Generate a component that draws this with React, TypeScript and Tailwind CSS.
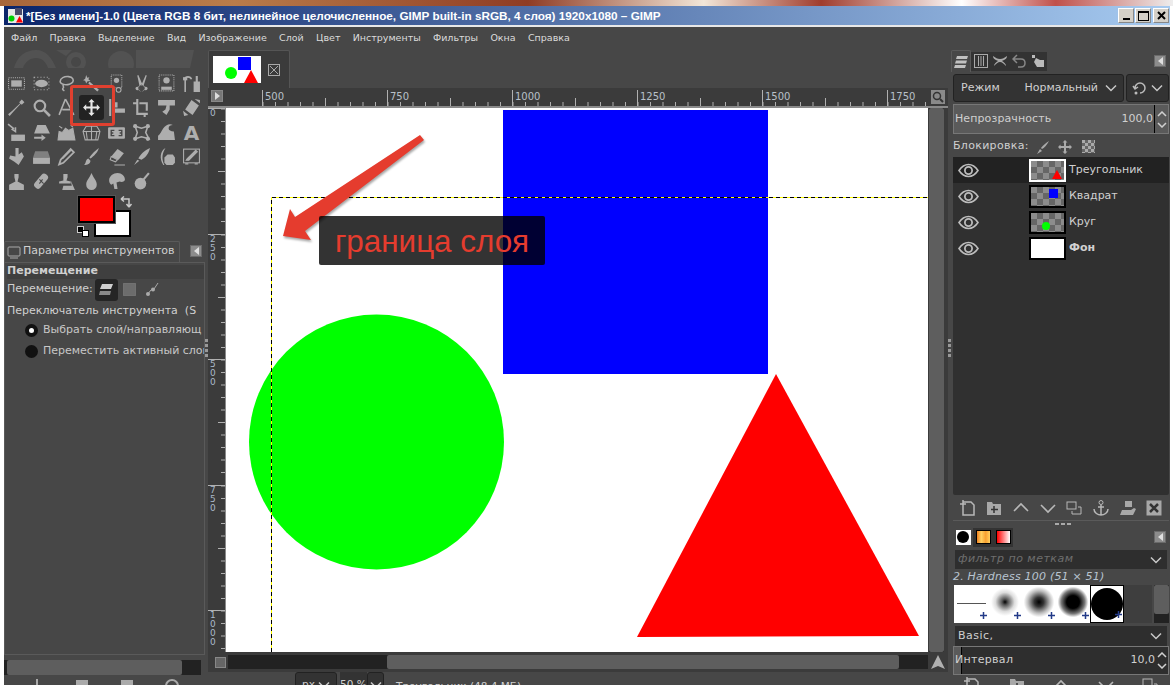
import type { ReactNode } from "react";

const sans = "font-['DejaVu_Sans',sans-serif]";

const menu = ["Файл", "Правка", "Выделение", "Вид", "Изображение", "Слой", "Цвет", "Инструменты", "Фильтры", "Окна", "Справка"];

// tool icons, 18x18 box, rows as in the toolbox
const toolIcons: ReactNode[] = [
  <><rect x="1.5" y="3.5" width="15" height="11" fill="none" stroke="currentColor" strokeDasharray="1 1" /><rect x="4" y="6" width="10" height="6" fill="currentColor" /></>,
  <><rect x="2" y="3" width="14" height="12" fill="none" stroke="currentColor" strokeDasharray="1 2" /><ellipse cx="9" cy="9" rx="6" ry="3.5" fill="currentColor" /></>,
  <path d="M3 7c0-3 4-5 8-4.500s5 3 4 5-5 3-8 2.500c-2-.5-4-1-4-3zM6 10c-1 2 1 2 0 3s-1 2 1 3" fill="none" stroke="currentColor" strokeWidth="1.500" />,
  <path d="M4 1l1 2.500 2-.5-1 2 2 1.500-3 .5-1 2-1-2.500L1 6l2-1.500zM7 7l9 8-1.500 1.500L6 9z" fill="currentColor" />,
  <><rect x="4" y="1" width="10" height="12" fill="none" stroke="currentColor" strokeDasharray="1 1" /><circle cx="9" cy="6" r="2.500" fill="currentColor" /><circle cx="11" cy="15" r="2.300" fill="none" stroke="currentColor" /></>,
  <path d="M6 1l3.500 8L13 1l1 .5-3 9.500a3 3 0 1 1-1.500-.5L9 10l-.5.500a3 3 0 1 1-1.500.5L5 1.500zM5 12a1.700 1.700 0 1 0 .1 0zM13 12a1.700 1.700 0 1 0 .1 0z" fill="currentColor" fillRule="evenodd" />,
  <><rect x="2" y="1" width="14" height="15" fill="none" stroke="currentColor" strokeDasharray="1 1" /><circle cx="9" cy="6" r="3" fill="currentColor" /><path d="M4 15v-3h10v3z" fill="currentColor" /></>,
  <><path d="M3 17V5c0-3 5-3 6 0" fill="none" stroke="currentColor" strokeWidth="1.500" /><rect x="1" y="3" width="4" height="3" fill="currentColor" /><path d="M11 7h6v10h-6zM13 2h2v5h-2z" fill="currentColor" /></>,

  <path d="M14 1.500l2.500 2.500-2.500 2.500-1-1L6 13l-3.500 4L1 15.500l4-3.500 7.500-7-1-1z" fill="currentColor" />,
  <><circle cx="7.500" cy="7.500" r="5" fill="none" stroke="currentColor" strokeWidth="2" /><path d="M11 11l6 6" stroke="currentColor" strokeWidth="2.500" /></>,
  <path d="M8 1l8 15M8 1L2 16M5 11h8" fill="none" stroke="currentColor" strokeWidth="1.500" />,
  <path d="M9 1l3 3h-2v4h4V6l3 3-3 3v-2h-4v4h2l-3 3-3-3h2v-4H4v2L1 9l3-3v2h4V4H6z" fill="#e8e8e8" />,
  <path d="M2 1h2v16H2zM6 4h4v5h-4zM6 10h11v4H6z" fill="currentColor" />,
  <path d="M1 4h3V1h2v13h9v2h-2v2h-2v-2H4V6H1zM7 4h8v8h-2V6H7z" fill="currentColor" />,
  <path d="M1 2h16v5h-5v4l-3 5-4-3 3-2 1-4H1z" fill="currentColor" />,
  <path d="M9 2l7 5-6 9-7-5zM12 1l5 1v3zM1 12l1 5 4-1z" fill="currentColor" />,

  <><path d="M1 1l5 4-1 1 3 2V4" fill="none" stroke="currentColor" strokeWidth="1.500" /><rect x="4" y="11" width="13" height="6" fill="currentColor" /></>,
  <path d="M5 2h8l4 8H2zM2 13h7v-2l4 3-4 3v-2H2z" fill="currentColor" />,
  <path d="M2 8l3 1 3-4 3 2 4-2 2 11H1zM2 3l3 2M13 2l2 2" fill="currentColor" stroke="currentColor" />,
  <path d="M4 3h10l3 5-2 8H3L1 8zM1 8h16M9 3v13M5 16L4 8M13 16l1-8" fill="none" stroke="currentColor" />,
  <><rect x="1" y="4" width="16" height="11" rx="1" fill="currentColor" /><path d="M7 7H4v5h3M11 7h3v5h-3M6 9.500H4M12 9.500h2" fill="none" stroke="#474747" strokeWidth="1.300" /></>,
  <><path d="M3 3l6 2 6-2-2 6 3 6-7-2-6 2 2-6z" fill="none" stroke="currentColor" strokeWidth="1.500" /><circle cx="3" cy="3" r="2" fill="currentColor" /><circle cx="15" cy="3" r="2" fill="currentColor" /><circle cx="3" cy="15" r="2" fill="currentColor" /><circle cx="15" cy="15" r="2" fill="currentColor" /></>,
  <path d="M1 16v-4c2-1 3-4 5-7s6-5 9-3c-2 0-4 1-4 3s2 3 5 3l1 8z" fill="currentColor" />,
  <text x="9" y="16" textAnchor="middle" fontSize="19" fontWeight="700" fill="currentColor" fontFamily="DejaVu Sans">A</text>,

  <path d="M8 1h3v6l3-2 2 4-5 8-4-3-5-3 1-3 5 1z" fill="currentColor" />,
  <><path d="M3 4h12l2 6H1z" fill="currentColor" opacity=".55" /><rect x="1" y="10" width="16" height="6" fill="currentColor" /></>,
  <path d="M13 2l3 3L6 15l-4 1.500L3.500 12zM13 3L5 11" fill="none" stroke="currentColor" strokeWidth="1.700" />,
  <path d="M16 1c-1 4-5 8-8 10l-1-1c2-3 6-7 9-9zM6 11l2 2c0 3-3 4-6 4 2-1 1-5 4-6z" fill="currentColor" />,
  <><path d="M10 2l6 4-5 6-7-3z" fill="currentColor" /><path d="M4 9l6 3-2 2-5-2zM7 17h10" stroke="currentColor" fill="none" /></>,
  <path d="M17 1c-1 5-4 9-8 11l-3-1c2-4 6-8 11-10zM5 12l2 1-5 4z" fill="currentColor" />,
  <><path d="M8 1C3 4 2 11 6 17h1C4 11 5 6 8 1z" fill="currentColor" /><path d="M10 7h5l2 3v5l-2 2h-6l-2-2v-5z" fill="currentColor" /></>,
  <><rect x="1.500" y="2" width="15" height="13" fill="none" stroke="currentColor" /><path d="M5 11l8-8 1.500 1.500-8 8H4zM3 16h3M12 16h3" fill="currentColor" stroke="currentColor" /></>,

  <path d="M7 2h4v3l-1 4 6 3v4H2v-4l6-3-1-4zM2 16h14v1H2z" fill="currentColor" />,
  <><rect x="5" y="1" width="7" height="16" rx="3" transform="rotate(40 9 9)" fill="currentColor" /><path d="M7 7l4 4M10 7l-3 4" stroke="#474747" /></>,
  <path d="M6 2h4v3l-1 3 4 1v2H2V9l4-1zM13 8l4 9H5l1-4h8z" fill="currentColor" />,
  <path d="M9 1c2 5 5 7 5 11a5 5 0 0 1-10 0c0-4 3-6 5-11z" fill="currentColor" />,
  <path d="M2 8c0-4 4-7 8-7s7 3 7 6c0 2-3 3-5 2l-3 1 1 6H7l-1-5-2 1c-1-1-2-2-2-4z" fill="currentColor" />,
  <><circle cx="8" cy="11" r="5.500" fill="currentColor" /><path d="M11 7l5-6" stroke="currentColor" strokeWidth="2" /></>,
];

const Tool = ({ icon, active }: { icon: ReactNode; active?: boolean }) => (
  <div className="flex h-[24.500px] w-[25px] items-center justify-center">
    <div className={active ? "flex h-[25px] w-[25px] items-center justify-center rounded-[3px] bg-[#222]" : "flex h-[25px] w-[25px] items-center justify-center"}>
      <svg width="19" height="19" viewBox="0 0 18 18" className="text-[#aeaeae]">{icon}</svg>
    </div>
  </div>
);

const Collapse = () => (
  <div className="flex h-[12px] w-[12px] items-center justify-center border border-[#6a6a6a] bg-[#8c8c8c]">
    <div className="h-0 w-0 border-y-[4px] border-r-[5px] border-y-transparent border-r-[#e0e0e0]" />
  </div>
);

const Chevron = ({ className = "" }: { className?: string }) => (
  <svg width="12" height="8" viewBox="0 0 12 8" className={className}>
    <path d="M1 1.500l5 5 5-5" fill="none" stroke="#c8c8c8" strokeWidth="1.500" />
  </svg>
);

const Spin = () => (
  <div className="flex w-[13px] flex-col items-center justify-center gap-[5px]">
    <svg width="10" height="6" viewBox="0 0 10 6"><path d="M1 5l4-4 4 4" fill="none" stroke="#d0d0d0" strokeWidth="1.500" /></svg>
    <svg width="10" height="6" viewBox="0 0 10 6"><path d="M1 1l4 4 4-4" fill="none" stroke="#d0d0d0" strokeWidth="1.500" /></svg>
  </div>
);

const Eye = () => (
  <svg width="21" height="15" viewBox="0 0 21 15">
    <path d="M1 7.500C4 3 7 1.500 10.500 1.500S17 3 20 7.500c-3 4.500-6 6-9.500 6S4 12 1 7.500z" fill="none" stroke="#bdbdbd" strokeWidth="1.600" />
    <circle cx="10.500" cy="7.500" r="3.600" fill="none" stroke="#bdbdbd" strokeWidth="1.800" />
  </svg>
);

const checker = "bg-[repeating-conic-gradient(#666_0%_25%,#8c8c8c_0%_50%)] bg-[length:12px_12px]";

const layers = [
  { name: "Треугольник", selected: true, mark: <div className="absolute right-[2px] bottom-[1px] h-0 w-0 border-x-[5px] border-b-[9px] border-x-transparent border-b-[#ff0000]" /> },
  { name: "Квадрат", mark: <div className="absolute top-[2px] left-[18px] h-[9px] w-[9px] bg-[#0000ff]" /> },
  { name: "Круг", mark: <div className="absolute bottom-[2px] left-[11px] h-[8px] w-[8px] rounded-full bg-[#00ff00]" /> },
  { name: "Фон", bold: true, white: true },
];

const LayerRow = ({ name, selected, mark, bold, white }: { name: string; selected?: boolean; mark?: ReactNode; bold?: boolean; white?: boolean }) => (
  <div className={selected ? "flex h-[26px] items-center bg-[#222]" : "flex h-[26px] items-center"}>
    <div className="flex w-[76px] justify-center pr-[46px]"><Eye /></div>
    <div className={(selected ? "border-white " : "border-black ") + "relative h-[23px] w-[37px] shrink-0 border-2 " + (white ? "bg-white" : checker)}>{mark}</div>
    <span className={"ml-[3px] text-[11px] text-[#d0d0d0] " + (bold ? "font-bold" : "")}>{name}</span>
  </div>
);

// one stretch of the horizontal ruler, starts at a big tick
const RulerCell = ({ label }: { label: string }) => (
  <div className="relative h-full w-[125px] shrink-0 border-l border-[#b0b0b0]">
    <span className="block pl-[2px] text-[10px] leading-[14px] text-[#b8c0c8]">{label}</span>
    <svg width="125" height="16" className="absolute top-0 left-0">
      {Array.from({ length: 10 }).map((_, i) => (
        <line key={i} x1={i * 12.5} x2={i * 12.5} y1={i === 5 ? 8 : 12} y2="16" stroke="#b0b0b0" />
      ))}
    </svg>
  </div>
);

const VRulerCell = ({ digits }: { digits: string }) => (
  <div className="relative h-[125.500px] w-full shrink-0 border-t border-[#b0b0b0]">
    <div className="flex w-[10px] flex-col pl-[2px] text-[9px] leading-[9px] text-[#a9b8c8]">
      {digits.split("").map((d, i) => <span key={i}>{d}</span>)}
    </div>
    <svg width="17" height="125" className="absolute top-0 left-0">
      {Array.from({ length: 10 }).map((_, i) => (
        <line key={i} y1={i * 12.5} y2={i * 12.5} x1={i === 5 ? 10 : 13} x2="17" stroke="#b0b0b0" />
      ))}
    </svg>
  </div>
);

const layerIcons: ReactNode[] = [
  <path d="M4 3h8l3 3v10H4zM1 5h6M4 1v6" fill="none" stroke="#b8b8b8" strokeWidth="1.500" />,
  <><path d="M2 3h5l1 2h8v11H2z" fill="#a8a8a8" /><path d="M9 7v7M6 10.500h7" stroke="#333" strokeWidth="1.500" /></>,
  <path d="M2 12l7-7 7 7" fill="none" stroke="#b8b8b8" strokeWidth="1.600" />,
  <path d="M2 6l7 7 7-7" fill="none" stroke="#b8b8b8" strokeWidth="1.600" />,
  <><rect x="2" y="3" width="9" height="7" fill="none" stroke="#b8b8b8" /><path d="M13 8h3v7H7v-3" fill="none" stroke="#b8b8b8" /></>,
  <><circle cx="9" cy="3.500" r="2" fill="none" stroke="#b8b8b8" /><path d="M9 6v10M6 8h6M2 10c0 4 4 6 7 6s7-2 7-6" fill="none" stroke="#b8b8b8" strokeWidth="1.500" /></>,
  <path d="M6 2h7v6H6zM3 11h9l3-2 2 1-3 6H1z" fill="#a8a8a8" />,
  <><rect x="1.500" y="1.500" width="15" height="15" fill="#a8a8a8" /><path d="M5 5l8 8M13 5l-8 8" stroke="#333" strokeWidth="2.500" /></>,
];

const brushes = [
  "bg-[radial-gradient(circle,#000_0%,#555_14%,#ddd_45%,transparent_66%)]",
  "bg-[radial-gradient(circle,#000_0%,#333_22%,#bbb_52%,transparent_72%)]",
  "bg-[radial-gradient(circle,#000_0%,#000_30%,#777_55%,transparent_72%)]",
];

const BrushMark = () => (
  <svg width="7" height="7" viewBox="0 0 7 7" className="absolute right-[1px] bottom-[4px]">
    <path d="M3.500 0v7M0 3.500h7" stroke="#223a88" strokeWidth="1.500" />
  </svg>
);

export default function App() {
  return (
    <div className={sans + " flex h-[685px] w-[1173px] flex-col overflow-hidden bg-white"}>
      <div className="h-[6px] shrink-0 bg-[linear-gradient(90deg,#a8663a,#b97c4a_20%,#8f3c24_45%,#f2e6d8_60%,#a03c2c_70%,#fff_82%,#c0504a_90%,#eee)]" />

      <div className="flex min-h-0 flex-1 flex-col pr-[3px] pl-[4px]">
        {/* title bar */}
        <div className="flex h-[19px] shrink-0 items-center bg-[linear-gradient(90deg,#0a246a,#a6caf0)] pr-[1px] pl-[3px]">
          <svg width="17" height="17" viewBox="0 0 17 17" className="shrink-0">
            <rect x="1" y="2" width="15" height="14" fill="#e8e8e8" />
            <path d="M8 1h7v7H8z" fill="#4a4a6a" />
            <circle cx="4.500" cy="11.500" r="3" fill="#00d000" />
            <path d="M12.500 9l3.500 6.500H9z" fill="#ff0000" />
          </svg>
          <span className="ml-[2px] font-['Liberation_Sans',sans-serif] text-[11.750px] font-bold whitespace-nowrap text-white">*[Без имени]-1.0 (Цвета RGB 8 бит, нелинейное целочисленное, GIMP built-in sRGB, 4 слоя) 1920x1080 – GIMP</span>
          <div className="ml-auto flex gap-[1px]">
            <div className="flex h-[15px] w-[16px] items-end justify-center border border-[#888] border-t-white border-l-white bg-[#d4d0c8] pb-[2px]"><div className="h-[2px] w-[7px] bg-black" /></div>
            <div className="flex h-[15px] w-[16px] items-center justify-center border border-[#888] border-t-white border-l-white bg-[#d4d0c8]"><div className="h-[10px] w-[11px] border border-t-2 border-black" /></div>
            <div className="ml-[1px] flex h-[15px] w-[16px] items-center justify-center border border-[#888] border-t-white border-l-white bg-[#d4d0c8]">
              <svg width="9" height="9" viewBox="0 0 9 9"><path d="M1 1l7 7M8 1L1 8" stroke="#000" strokeWidth="2" /></svg>
            </div>
          </div>
        </div>

        <div className="flex min-h-0 flex-1 flex-col border-t-2 border-[#e8e8e8] bg-[#474747]">
          {/* menu */}
          <div className="flex h-[23px] shrink-0 items-center gap-[12.300px] pl-[7px] text-[9.500px] text-[#dcdcdc]">
            {menu.map((m) => <span key={m}>{m}</span>)}
          </div>

          <div className="flex min-h-0 flex-1">
            {/* left dock */}
            <div className="flex w-[201px] shrink-0 flex-col">
              <svg width="180" height="18" viewBox="0 0 180 18" className="ml-[10px] shrink-0">
                <path d="M0 18C3 6 12 0 22 0s16 8 20 18h-8c-2-6-6-10-12-10s-11 4-13 10z" fill="#525252" />
                <circle cx="62" cy="12" r="10" fill="#525252" />
                <circle cx="62" cy="12" r="5" fill="#474747" />
                <path d="M42 0h16l-6 6z" fill="#525252" />
                <circle cx="107" cy="14" r="13" fill="#525252" />
                <path d="M122 0h58l-4 18h-54z" fill="#525252" />
              </svg>

              {/* tools */}
              <div className="relative mt-[3px] grid w-[200px] shrink-0 grid-cols-8">
                {toolIcons.map((icon, i) => <Tool key={i} icon={icon} active={i === 11} />)}
                <div className="absolute top-[14px] left-[66px] h-[41px] w-[45px] rounded-[3px] border-[3px] border-[#e0402f]" />
              </div>

              {/* fg / bg colours */}
              <div className="relative mt-[2px] h-[42px] shrink-0">
                <div className="absolute top-[14px] left-[90px] h-[27px] w-[37px] border-2 border-black bg-white" />
                <div className="absolute top-0 left-[74px] h-[27px] w-[37px] border-2 border-black bg-[#ff0000] outline outline-[#555]" />
                <svg width="13" height="13" viewBox="0 0 13 13" className="absolute top-0 left-[116px]">
                  <path d="M1 3h8v7M1 3l3-2.500M1 3l3 2.500M9 11l-2.500-3M9 11l2.500-3" fill="none" stroke="#c8c8c8" strokeWidth="1.500" />
                </svg>
                <div className="absolute top-[30px] left-[73px] h-[7px] w-[7px] border border-[#ccc] bg-black" />
                <div className="absolute top-[34px] left-[78px] h-[7px] w-[7px] border border-black bg-white" />
              </div>

              {/* tool options */}
              <div className="mt-[3px] flex h-[21px] shrink-0 items-center">
                <div className="flex h-full w-[176px] items-center gap-[2px] rounded-t-[2px] border border-b-0 border-[#5a5a5a] pl-[2px]">
                  <svg width="14" height="14" viewBox="0 0 14 14"><rect x="1" y="2" width="12" height="9" rx="1" fill="none" stroke="#aaa" /><path d="M3 13h8" stroke="#aaa" /></svg>
                  <span className="text-[11px] whitespace-nowrap text-[#d0d0d0]">Параметры инструментов</span>
                </div>
                <div className="ml-[10px]"><Collapse /></div>
              </div>
              <div className="flex h-[393px] shrink-0 flex-col overflow-hidden border border-[#5a5a5a] pl-[2px] text-[11px] text-[#d0d0d0]">
                <div className="mt-[2px] flex h-[14px] shrink-0 items-center bg-[#3f3f3f] font-bold">Перемещение</div>
                <div className="flex h-[22px] shrink-0 items-center">
                  <span>Перемещение:</span>
                  <div className="ml-[2px] flex h-[22px] w-[23px] items-center justify-center rounded-[3px] bg-[#252525]">
                    <svg width="15" height="13" viewBox="0 0 15 13"><path d="M3 1h11l-2 5H1z" fill="#cfcfcf" /><path d="M1 8h11l-1 4H0z" fill="#8a8a8a" /></svg>
                  </div>
                  <svg width="15" height="15" viewBox="0 0 15 15" className="ml-[4px]"><rect x="1.500" y="1.500" width="12" height="12" fill="#6c6c6c" stroke="#8a8a8a" strokeDasharray="1 1" /></svg>
                  <svg width="15" height="15" viewBox="0 0 15 15" className="ml-[8px]"><path d="M2 13l4-5 3-1 4-6" fill="none" stroke="#aaa" /><circle cx="3" cy="12" r="2" fill="#aaa" /><circle cx="8" cy="7.500" r="2" fill="#aaa" /></svg>
                </div>
                <div className="mt-[3px] flex h-[16px] shrink-0 items-center whitespace-nowrap">Переключатель инструмента&nbsp;&nbsp;(S</div>
                <div className="flex h-[21px] shrink-0 items-center gap-[5px] pl-[18px] whitespace-nowrap text-[#c8c8c8]">
                  <div className="flex h-[13px] w-[13px] shrink-0 items-center justify-center rounded-full bg-[#111]"><div className="h-[5px] w-[5px] rounded-full bg-white" /></div>
                  Выбрать слой/направляющ
                </div>
                <div className="flex h-[21px] shrink-0 items-center gap-[5px] pl-[18px] whitespace-nowrap text-[#c8c8c8]">
                  <div className="h-[13px] w-[13px] shrink-0 rounded-full bg-[#111]" />
                  Переместить активный слой
                </div>
              </div>
              <div className="mt-[5px] flex h-[15px] w-[197px] shrink-0 bg-[#222]">
                <div className="ml-[3px] h-full w-[175px] rounded-[2px] bg-[#5e5e5e]" />
              </div>
              <div className="mt-[4px] flex justify-around px-[10px]">
                <svg width="14" height="14"><path d="M7 0v14M0 7h14" stroke="#aaa" strokeWidth="2" /></svg>
                <svg width="14" height="14"><rect x="1" y="1" width="12" height="12" fill="#aaa" /></svg>
                <svg width="14" height="14"><rect x="1" y="1" width="12" height="12" fill="#aaa" /></svg>
                <svg width="14" height="14"><circle cx="7" cy="7" r="6" fill="none" stroke="#aaa" strokeWidth="2" /></svg>
              </div>
            </div>

            {/* sash */}
            <div className="flex w-[3px] shrink-0 flex-col justify-center gap-[2px] pb-[40px]">
              {[0, 1, 2, 3].map((i) => <div key={i} className="h-[3px] w-[3px] bg-[#999]" />)}
            </div>

            {/* image area */}
            <div className="flex w-[740px] shrink-0 flex-col bg-[#3b3b3b]">
              <div className="flex h-[38px] shrink-0 bg-[#474747]">
                <div className="flex w-[82px] items-center gap-[7px] rounded-t-[2px] border border-b-0 border-[#555] bg-[#3b3b3b] pl-[4px]">
                  <svg width="48" height="27" viewBox="0 0 48 27" className="bg-white">
                    <rect x="25" y="1" width="13" height="13" fill="#0000ff" />
                    <circle cx="18" cy="17" r="6" fill="#00ff00" />
                    <path d="M38 14l7 13H31z" fill="#ff0000" />
                  </svg>
                  <div className="flex h-[12px] w-[12px] items-center justify-center border border-[#aaa]">
                    <svg width="10" height="10"><path d="M1 1l8 8M9 1L1 9" stroke="#aaa" /></svg>
                  </div>
                </div>
              </div>

              {/* top ruler */}
              <div className="mt-[2px] flex h-[18px] shrink-0 border-b-2 border-[#8a8a8a]">
                <div className="flex w-[18px] shrink-0 items-start justify-center">
                  <div className="flex h-[12px] w-[12px] items-center justify-center border border-[#888] bg-[#777]">
                    <div className="h-0 w-0 border-y-[4px] border-l-[5px] border-y-transparent border-l-[#ddd]" />
                  </div>
                </div>
                <div className="flex w-[702px] shrink-0 overflow-hidden">
                  <div className="h-full w-[36px] shrink-0" />
                  {["500", "750", "1000", "1250", "1500", "1750"].map((l) => <RulerCell key={l} label={l} />)}
                </div>
                <div className="flex flex-1 items-start justify-center">
                  <div className="flex h-[14px] w-[14px] items-center justify-center bg-[#8a8a8a]">
                    <svg width="12" height="12" viewBox="0 0 12 12"><circle cx="5" cy="5" r="3.500" fill="none" stroke="#333" strokeWidth="1.500" /><path d="M8 8l3 3" stroke="#333" strokeWidth="2" /></svg>
                  </div>
                </div>
              </div>

              <div className="flex h-[544px] shrink-0">
                {/* left ruler */}
                <div className="flex w-[18px] shrink-0 flex-col overflow-hidden border-r border-[#8a8a8a]">
                  {["0", "250", "500", "750", "1000"].map((d) => <VRulerCell key={d} digits={d} />)}
                </div>
                {/* canvas */}
                <div className="relative w-[702px] shrink-0 overflow-hidden bg-white">
                  <svg width="702" height="544" viewBox="226 108 702 544" className="absolute inset-0">
                    <rect x="503" y="110" width="265" height="264" fill="#0000ff" />
                    <circle cx="376.500" cy="442" r="127.500" fill="#00ff00" />
                    <path d="M776 374L637 637l282-1z" fill="#ff0000" />
                    <path d="M271.500 652V197.500H928" fill="none" stroke="#ffff00" />
                    <path d="M271.500 652V197.500H928" fill="none" stroke="#000" strokeDasharray="4 3" />
                    <path d="M420 135l4 5-119 91 6 9-28-4 7-27 5 8z" fill="#e53c2e" style={{ filter: "drop-shadow(1px 2px 1px rgba(0,0,0,.35))" }} />
                  </svg>
                  <div className="absolute top-[108px] left-[93px] flex h-[49px] w-[226px] items-center justify-center rounded-[2px] bg-black/80 pt-[2px] font-['Liberation_Sans',sans-serif] text-[31.400px] text-[#e53c2e]">граница слоя</div>
                </div>
                {/* v scrollbar */}
                <div className="ml-[1px] flex w-[15px] shrink-0 bg-[#222]">
                  <div className="h-full w-full rounded-[2px] bg-[#5e5e5e]" />
                </div>
              </div>

              <div className="mt-[3px] flex h-[14px] shrink-0 items-center">
                <div className="flex w-[20px] shrink-0 justify-center pl-[4px]"><div className="h-[11px] w-[11px] border border-[#888] bg-[#666]" /></div>
                <div className="flex h-full w-[700px] shrink-0 bg-[#222]">
                  <div className="ml-[159px] h-full w-[512px] rounded-[2px] bg-[#5e5e5e]" />
                </div>
                <div className="flex flex-1 justify-center">
                  <svg width="14" height="14" viewBox="0 0 14 14"><path d="M7 0l7 14-7-3-7 3z" fill="#b0b0b0" /></svg>
                </div>
              </div>

              {/* status */}
              <div className="mt-[3px] flex h-[22px] shrink-0 items-start bg-[#474747] pl-[87px] text-[10.500px] text-[#d0d0d0]">
                <div className="flex h-[22px] w-[42px] items-center justify-between rounded-[3px] border border-[#222] bg-[#333] px-[6px] pt-[4px]"><span>px</span><Chevron /></div>
                <div className="ml-[3px] flex h-[22px] w-[27px] items-center bg-[#333] pt-[4px]">50 %</div>
                <div className="flex h-[22px] w-[17px] items-center justify-center rounded-[3px] border border-[#222] bg-[#333] pt-[4px]"><Chevron /></div>
                <span className="mt-[7px] ml-[12px]">Треугольник (48,4 МБ)</span>
              </div>
            </div>

            {/* sash */}
            <div className="flex w-[3px] shrink-0 flex-col justify-center gap-[2px] pb-[40px]">
              {[0, 1, 2, 3].map((i) => <div key={i} className="h-[3px] w-[3px] bg-[#999]" />)}
            </div>

            {/* right dock */}
            <div className="flex min-w-0 flex-1 flex-col pr-[1px] pl-[2px] text-[11px] text-[#d0d0d0]">
              <div className="-ml-[2px] flex h-[22px] shrink-0 items-center">
                <div className="flex h-[22px] w-[20px] items-center justify-center rounded-t-[2px] border border-b-0 border-[#5a5a5a]">
                  <svg width="14" height="14" viewBox="0 0 14 14"><path d="M3 1h11l-1 3H2zM2 5.500h11l-1 3H1zM1 10h11l-1 3H0z" fill="#c0c0c0" /></svg>
                </div>
                <div className="flex h-[19px] w-[19px] items-center justify-center bg-[#333]">
                  <svg width="14" height="14" viewBox="0 0 14 14"><rect x=".5" y=".5" width="13" height="13" fill="none" stroke="#aaa" /><path d="M4.500 2v10M7 2v10M9.500 2v10" stroke="#aaa" /></svg>
                </div>
                <div className="flex h-[19px] w-[19px] items-center justify-center bg-[#333]">
                  <svg width="14" height="14" viewBox="0 0 14 14"><path d="M0 2c3 2 4 3 7 3s4-1 7-3c0 3-3 4-5 5 2 1 4 3 4 5-2-2-4-4-6-4s-4 2-6 4c0-2 2-4 4-5-2-1-5-2-5-5z" fill="#aaa" /></svg>
                </div>
                <div className="flex h-[19px] w-[19px] items-center justify-center bg-[#333]">
                  <svg width="14" height="14" viewBox="0 0 14 14"><path d="M5 1L1 5l4 4M1 5h8c3 0 4 2 4 4s-1 4-4 4H6" fill="none" stroke="#888" strokeWidth="1.500" /></svg>
                </div>
                <div className="flex h-[19px] w-[19px] items-center justify-center bg-[#333]">
                  <svg width="14" height="14" viewBox="0 0 14 14"><path d="M5 4l4 2h4v7H6L3 8zM1 1h3v3H1z" fill="#bbb" /></svg>
                </div>
                <div className="mr-[3px] ml-auto"><Collapse /></div>
              </div>

              <div className="mt-[2px] flex h-[28px] shrink-0 gap-[2px]">
                <div className="flex flex-1 items-center rounded-[3px] border border-[#222] bg-[#333] pr-[6px] pl-[7px]">
                  <span>Режим</span>
                  <span className="ml-auto">Нормальный</span>
                  <Chevron className="ml-[7px]" />
                </div>
                <div className="flex w-[43px] items-center justify-between rounded-[3px] border border-[#222] bg-[#333] px-[5px]">
                  <svg width="14" height="14" viewBox="0 0 14 14"><path d="M3 7a5 5 0 1 1 5 5M1 5l2 3 3-2" fill="none" stroke="#bbb" strokeWidth="1.500" /><circle cx="4" cy="12" r="1.500" fill="#bbb" /></svg>
                  <Chevron />
                </div>
              </div>
              <div className="mt-[2px] flex h-[30px] shrink-0 items-stretch border border-[#777] bg-[#5a5a5a] pl-[1px]">
                <span className="self-center tracking-[.1px]">Непрозрачность</span>
                <span className="ml-auto self-center">100,0</span>
                <div className="ml-[1px] w-[1px] bg-black" />
                <Spin />
              </div>
              <div className="mt-[3px] flex h-[19px] shrink-0 items-center">
                <span className="tracking-[.3px]">Блокировка:</span>
                <svg width="14" height="14" viewBox="0 0 14 14" className="ml-[7px]"><path d="M13 1c-2 4-5 7-7 8l-1-1c2-3 5-5 8-7zM4 9l2 2-5 3z" fill="#aaa" /></svg>
                <svg width="14" height="14" viewBox="0 0 14 14" className="ml-[8px]"><path d="M7 0l2.500 2.500H8V6h3.500V4.500L14 7l-2.500 2.500V8H8v3.500h1.500L7 14l-2.500-2.500H6V8H2.500v1.500L0 7l2.500-2.500V6H6V2.500H4.500z" fill="#aaa" /></svg>
                <div className="ml-[10px] h-[13px] w-[13px] bg-[repeating-conic-gradient(#666_0%_25%,#aaa_0%_50%)] bg-[length:6px_6px]" />
              </div>
              <div className="mt-[1px] h-[338px] shrink-0 rounded-[2px] bg-[#303030]">
                {layers.map((l) => <LayerRow key={l.name} {...l} />)}
              </div>
              <div className="flex h-[26px] shrink-0 items-center justify-between border-b border-[#5a5a5a] px-[3px] pt-[1px]">
                {layerIcons.map((p, i) => (
                  <svg key={i} width="18" height="18" viewBox="0 0 18 18" className="mx-[2.500px]">{p}</svg>
                ))}
              </div>
              <div className="flex h-[6px] shrink-0 items-center justify-center gap-[2px] pb-[1px] pl-[4px]">
                {[0, 1, 2].map((i) => <div key={i} className="h-[2px] w-[4px] bg-[#aaa]" />)}
              </div>

              <div className="flex h-[20px] shrink-0 items-center">
                <div className="flex h-[20px] w-[20px] items-center justify-center">
                  <div className="flex h-[15px] w-[15px] items-center justify-center bg-white"><div className="h-[12px] w-[12px] rounded-full bg-black" /></div>
                </div>
                <div className="flex h-[19px] w-[20px] items-center justify-center bg-[#333]">
                  <div className="h-[14px] w-[15px] border border-black bg-[linear-gradient(90deg,#f08020,#ffd060,#f8a030,#ffd060)]" />
                </div>
                <div className="flex h-[19px] w-[20px] items-center justify-center bg-[#333]">
                  <div className="h-[14px] w-[15px] border border-black bg-[linear-gradient(90deg,#f00,#fff)]" />
                </div>
                <div className="mr-[3px] ml-auto"><Collapse /></div>
              </div>
              <div className="mx-[2px] mt-[3px] flex h-[19px] shrink-0 items-center justify-between bg-[#2e2e2e] pr-[5px] pl-[3px]">
                <span className="tracking-[.5px] text-[#6e6e6e] italic">фильтр по меткам</span>
                <Chevron />
              </div>
              <div className="mt-[1px] flex h-[15px] shrink-0 items-center tracking-[.2px] text-[#b8c4d0] italic">2. Hardness 100 (51 × 51)</div>
              <div className="flex h-[38px] shrink-0 gap-[2px] pl-[1px]">
                <div className="flex w-[199px] bg-[#3e3e3e]">
                  <div className="flex h-full w-[170px] bg-white">
                    <div className="relative flex h-full w-[34px] items-center justify-center pb-[2px]"><div className="h-[1px] w-[29px] bg-[#555]" /><BrushMark /></div>
                    {brushes.map((b, i) => (
                      <div key={i} className="relative flex h-full w-[34px] items-center justify-center pb-[4px]"><div className={"h-[30px] w-[30px] " + b} /><BrushMark /></div>
                    ))}
                    <div className="relative flex h-full w-[34px] items-center justify-center border border-black"><div className="h-[32px] w-[32px] shrink-0 rounded-full bg-black" /><BrushMark /></div>
                  </div>
                </div>
                <div className="w-[15px] bg-[#222]"><div className="h-[29px] rounded-[2px] bg-[#5e5e5e]" /></div>
              </div>
              <div className="mx-[2px] mt-[3px] flex h-[20px] shrink-0 items-center justify-between bg-[#2e2e2e] pr-[5px] pl-[3px]">
                <span className="tracking-[.5px]">Basic,</span>
                <Chevron />
              </div>
              <div className="flex h-[29px] shrink-0 items-stretch border border-[#777] bg-[#2e2e2e]">
                <div className="flex items-center bg-[linear-gradient(90deg,#5a5a5a_7px,#000_7px,#000_8px,transparent_8px)] pl-[1px] tracking-[.3px]">Интервал</div>
                <span className="ml-auto self-center">10,0</span>
                <Spin />
              </div>
              <div className="mt-[1px] flex shrink-0 justify-between px-[10px]">
                {layerIcons.slice(0, 5).map((p, i) => (
                  <svg key={i} width="18" height="18" viewBox="0 0 18 18">{p}</svg>
                ))}
              </div>
            </div>
          </div>
        </div>
      </div>
    </div>
  );
}
